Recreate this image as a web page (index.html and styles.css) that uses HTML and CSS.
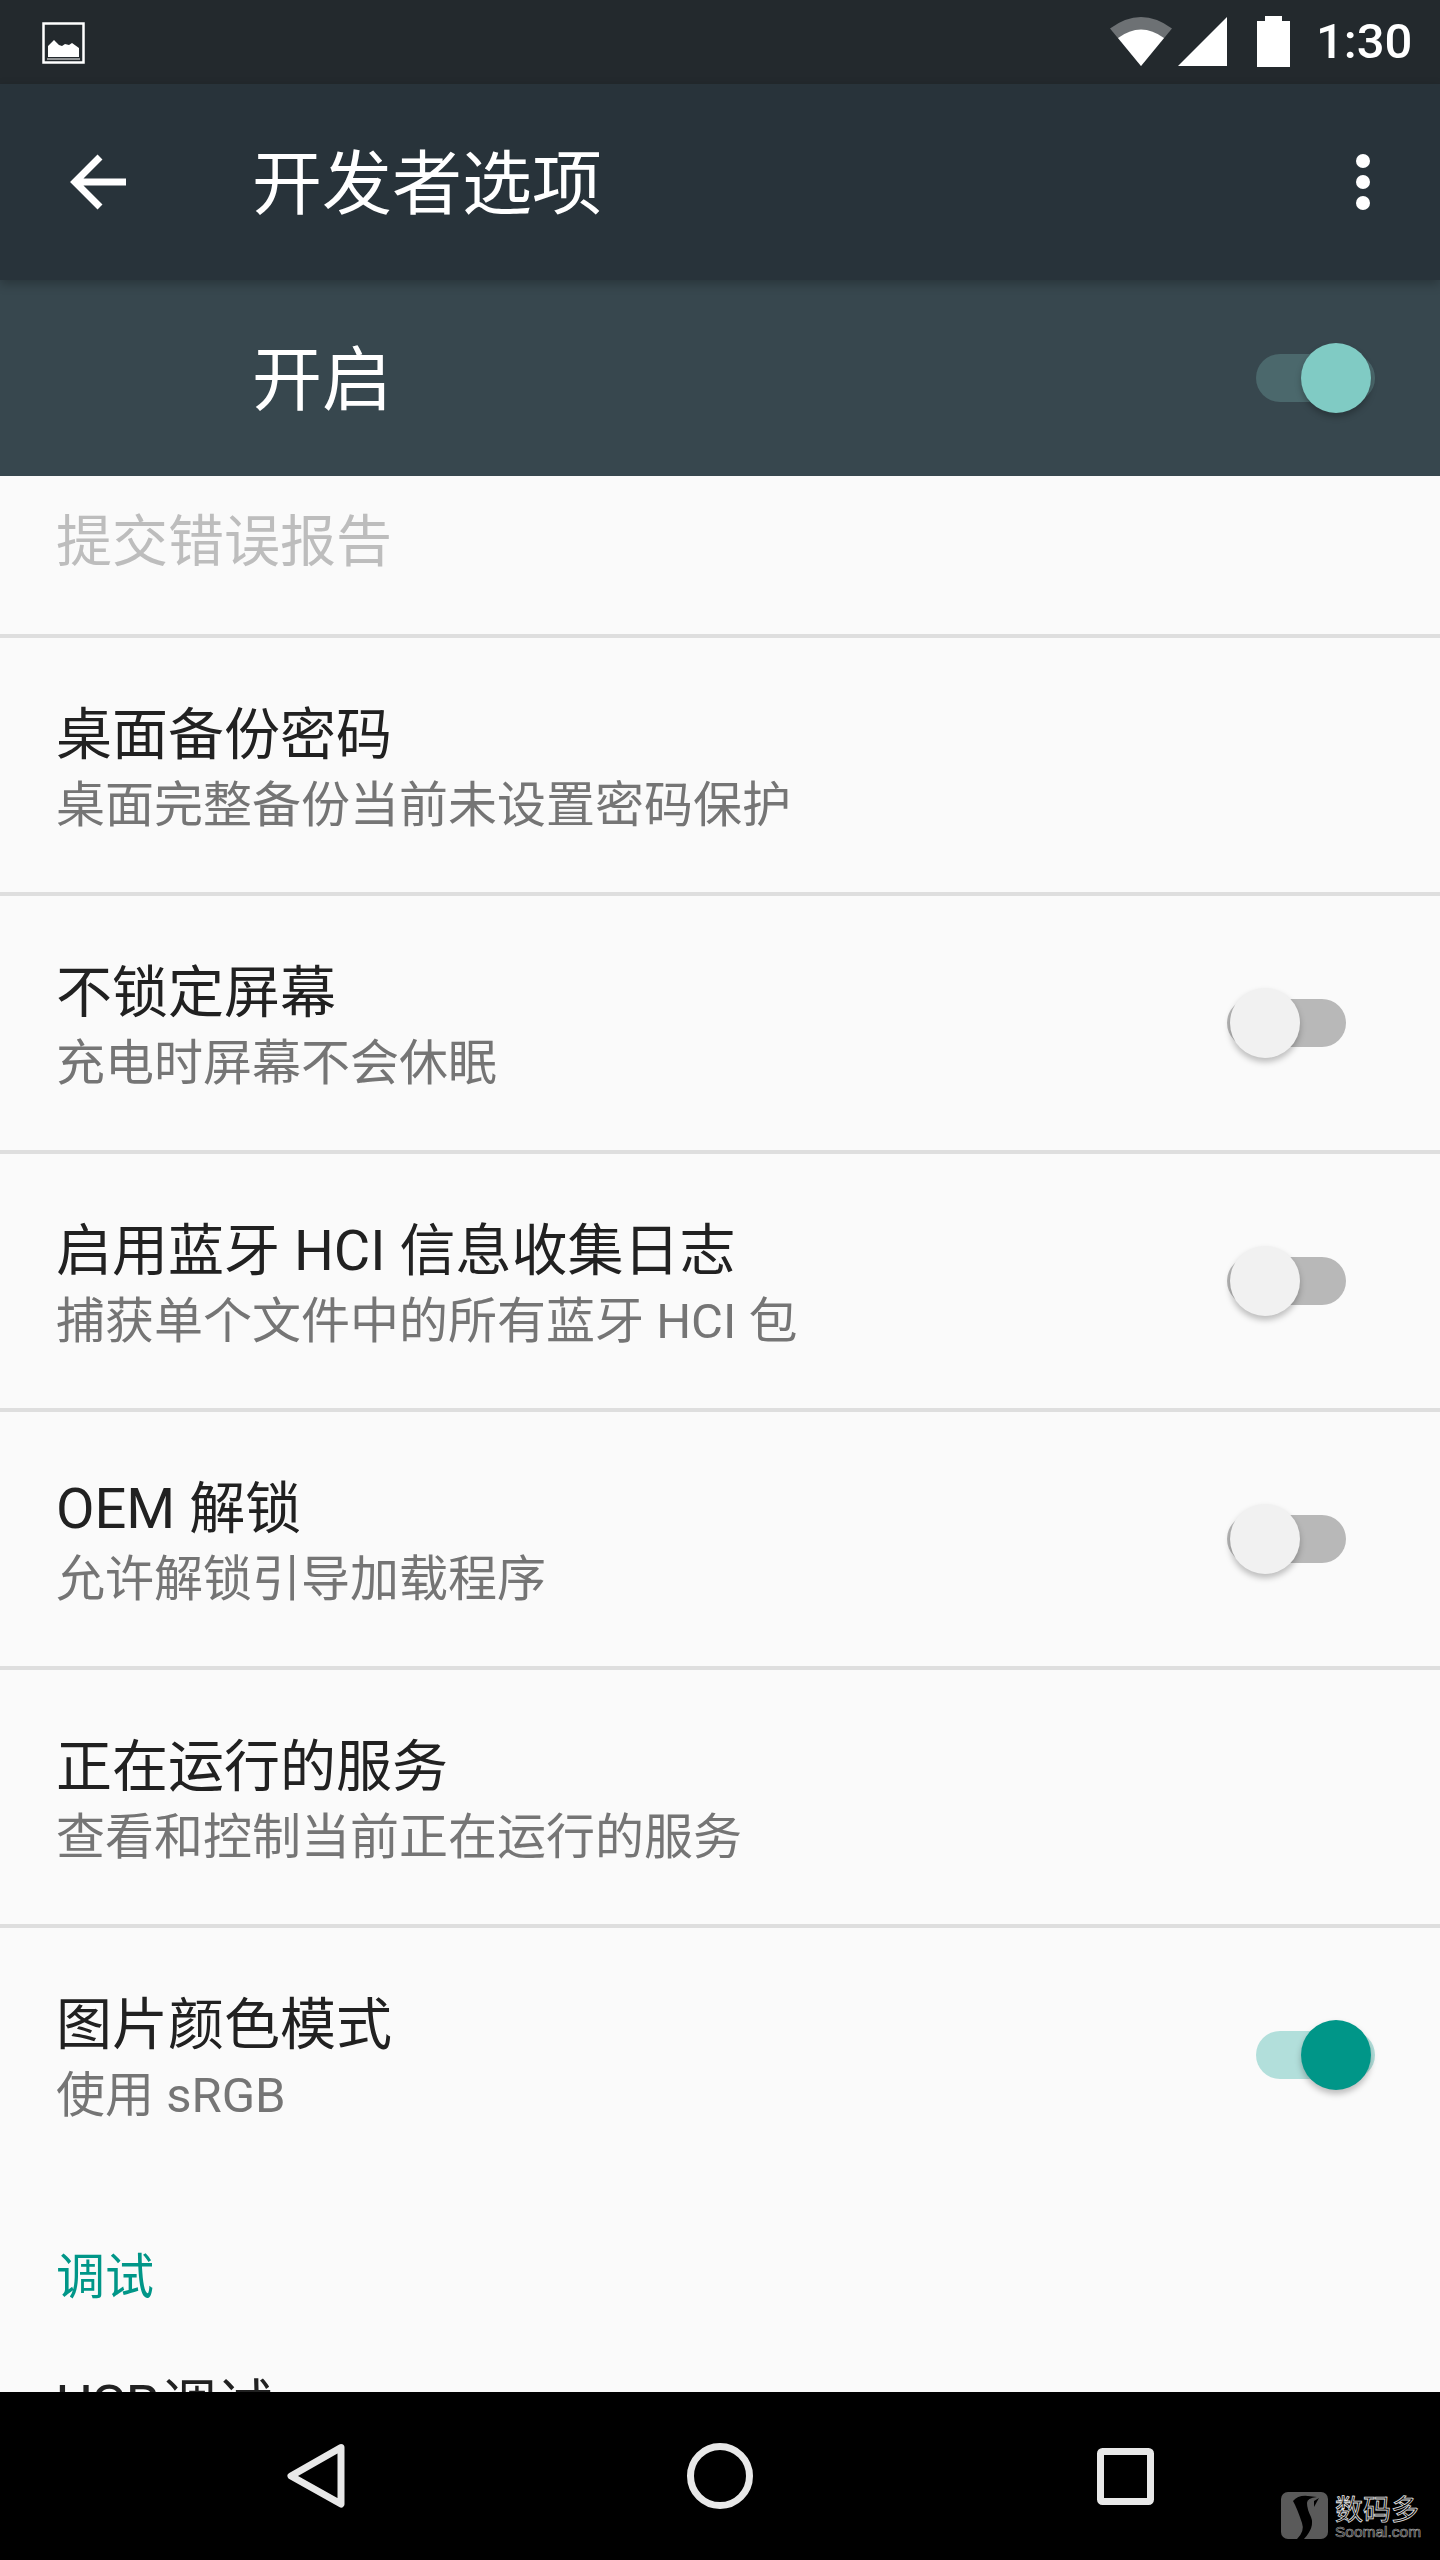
FILE: index.html
```html
<!DOCTYPE html>
<html lang="zh-CN">
<head>
<meta charset="utf-8">
<title>开发者选项</title>
<link rel="stylesheet" href="styles.css">
</head>
<body>
<div class="screen">
  <header class="status">
    <svg class="ic-image" viewBox="0 0 43 42"><rect x="1.500" y="1.500" width="40" height="39" fill="none" stroke="#fff" stroke-width="2.500"/><path d="M6 35V24l6-6 5 5 3 1 3-2 4 1 3-2 7 5v9z" fill="#fff"/><path d="M5 37h33" stroke="#fff" stroke-width="1"/></svg>
    <span class="spacer"></span>
    <svg class="ic-wifi" viewBox="0 0 62 49"><path d="M0 11.500Q31 -11.500 62 11.500L31 49z" fill="#6d7174"/><path d="M8 21Q31 4 54 21L31 49z" fill="#fff"/></svg>
    <svg class="ic-cell" viewBox="0 0 49 49"><path d="M49 0V49H0z" fill="#fff"/></svg>
    <svg class="ic-battery" viewBox="0 0 33 51"><path d="M8 0h17v5h8v46H0V5h8z" fill="#fff"/></svg>
    <span class="clock">1:30</span>
  </header>

  <div class="toolbar">
    <svg class="ic-back" viewBox="0 0 56 56"><path d="M56 28H6M30 3L5 28l25 25" fill="none" stroke="#fff" stroke-width="7"/></svg>
    <h1 class="toolbar-title">开发者选项</h1>
    <span class="spacer"></span>
    <div class="more"><i></i><i></i><i></i></div>
  </div>

  <div class="masterbar">
    <span class="master-label">开启</span>
    <span class="spacer"></span>
    <span class="switch on master"><span class="track"></span><span class="thumb"></span></span>
  </div>

  <main class="list">
    <div class="row clipped"><div class="texts"><div class="title disabled">提交错误报告</div></div></div>
    <div class="row"><div class="texts"><div class="title">桌面备份密码</div><div class="sub">桌面完整备份当前未设置密码保护</div></div></div>
    <div class="row"><div class="texts"><div class="title">不锁定屏幕</div><div class="sub">充电时屏幕不会休眠</div></div><span class="switch off"><span class="track"></span><span class="thumb"></span></span></div>
    <div class="row"><div class="texts"><div class="title">启用蓝牙 HCI 信息收集日志</div><div class="sub">捕获单个文件中的所有蓝牙 HCI 包</div></div><span class="switch off"><span class="track"></span><span class="thumb"></span></span></div>
    <div class="row"><div class="texts"><div class="title">OEM 解锁</div><div class="sub">允许解锁引导加载程序</div></div><span class="switch off"><span class="track"></span><span class="thumb"></span></span></div>
    <div class="row"><div class="texts"><div class="title">正在运行的服务</div><div class="sub">查看和控制当前正在运行的服务</div></div></div>
    <div class="row plain"><div class="texts"><div class="title">图片颜色模式</div><div class="sub">使用 sRGB</div></div><span class="switch on"><span class="track"></span><span class="thumb"></span></span></div>
    <div class="category">调试</div>
    <div class="row plain"><div class="texts"><div class="title">USB调试</div><div class="sub">连接 USB 后启用调试模式</div></div></div>
  </main>

  <nav class="navbar">
    <svg class="nav-ic" viewBox="0 0 84 84"><path d="M67 13.500L17 42l50 28z" fill="none" stroke="#e8e8e8" stroke-width="7" stroke-linejoin="round"/></svg>
    <svg class="nav-ic" viewBox="0 0 84 84"><circle cx="42" cy="42" r="29.500" fill="none" stroke="#e8e8e8" stroke-width="7"/></svg>
    <svg class="nav-ic" viewBox="0 0 84 84"><rect x="18.500" y="17.500" width="50" height="50" rx="2" fill="none" stroke="#e8e8e8" stroke-width="7"/></svg>
    <div class="watermark">
      <svg class="wm-logo" viewBox="0 0 47 47"><rect width="47" height="47" rx="7" fill="#5a5a5a"/><path d="M12 9Q17 3 27 4L36 5Q26 6 26 11q0 6 4 14 4 10-7 22h-7q8-8 5-16Q16 16 12 9z" fill="#000"/><path d="M33 9l5-3-5 9z" fill="#000"/></svg>
      <div class="wm-text"><span class="wm-cn">数码多</span><span class="wm-en">Soomal.com</span></div>
    </div>
  </nav>
</div>
</body>
</html>
```
FILE: styles.css
```css
* { box-sizing: border-box; }
html, body { margin: 0; padding: 0; }
body { font-family: Roboto, "Noto Sans CJK SC", sans-serif; background: #000; }

.screen { width: 1440px; height: 2560px; display: flex; flex-direction: column; overflow: hidden; position: relative; }
.spacer { flex: 1; }

.status { height: 84px; flex: none; background: #23292d; display: flex; align-items: flex-start; padding: 17px 32px 0 42px; }
.ic-image { width: 43px; height: 42px; margin-top: 5px; }
.ic-wifi { width: 62px; height: 49px; }
.ic-cell { width: 49px; height: 49px; margin-left: 6px; }
.ic-battery { width: 33px; height: 51px; margin-left: 30px; margin-top: -1px; }
.clock { width: 92px; margin-left: 26px; margin-top: 1px; font-size: 49px; line-height: 48px; font-weight: 500; color: #fff; }

.toolbar { height: 196px; flex: none; background: #28333a; display: flex; align-items: center; padding: 6px 70px 0 70px; box-shadow: 0 4px 10px rgba(0,0,0,.25); position: relative; z-index: 1; }
.ic-back { width: 56px; height: 56px; margin-top: -6px; }
.toolbar-title { margin: 0 0 0 126px; font-size: 70px; font-weight: 400; line-height: 90px; color: #fff; }
.more { display: flex; flex-direction: column; gap: 7px; margin-top: -6px; }
.more i { display: block; width: 14px; height: 14px; border-radius: 50%; background: #fff; }

.masterbar { height: 196px; flex: none; background: #37474e; display: flex; align-items: center; padding-left: 252px; }
.master-label { font-size: 70px; line-height: 90px; color: #fff; margin-top: 6px; }

.list { flex: 1; min-height: 0; overflow: hidden; background: #fafafa; }
.row { height: 258px; border-bottom: 4px solid #dedede; display: flex; align-items: center; padding: 0 0 0 56px; }
.row.clipped { height: 162px; padding-bottom: 28px; }
.row.plain { border-bottom: 0; height: 254px; }
.texts { flex: 1; min-width: 0; padding-top: 3px; }
.title { font-size: 56px; line-height: 76px; margin-bottom: 2px; color: #212121; }
.title.disabled { color: #bdbdbd; }
.sub { font-size: 49px; line-height: 62px; color: #757575; }
.category { height: 127px; padding: 64px 0 0 56px; font-size: 49px; line-height: 64px; color: #009688; }

.switch { flex: none; position: relative; width: 119px; height: 70px; display: flex; align-items: center; }
.switch.off { margin-right: 94px; }
.switch.on { margin-right: 65px; }
.track { display: block; width: 119px; height: 48px; border-radius: 24px; background: #b8b8b8; }
.thumb { position: absolute; top: 0; left: 3px; width: 70px; height: 70px; border-radius: 50%; background: #f1f1f1; box-shadow: 0 4px 6px rgba(0,0,0,.25); }
.switch.on .track { background: #b2dfdb; }
.switch.on .thumb { left: 45px; background: #009688; }
.switch.master .track { background: #4b686c; }
.switch.master .thumb { background: #80cbc4; }

.navbar { height: 168px; flex: none; background: #000; display: flex; align-items: center; justify-content: center; gap: 320px; position: relative; }
.nav-ic { width: 84px; height: 84px; }
.watermark { position: absolute; left: 1281px; top: 100px; display: flex; gap: 7px; }
.wm-logo { width: 47px; height: 47px; display: block; }
.wm-text { display: flex; flex-direction: column; width: 90px; }
.wm-cn { font-size: 28px; line-height: 33px; height: 33px; color: #000; -webkit-text-stroke: .8px #e6e6e6; font-family: "Noto Sans CJK SC", sans-serif; }
.wm-en { font-size: 15.500px; line-height: 14px; color: #000; -webkit-text-stroke: .7px #9a9a9a; font-family: "Liberation Sans", sans-serif; }
```
